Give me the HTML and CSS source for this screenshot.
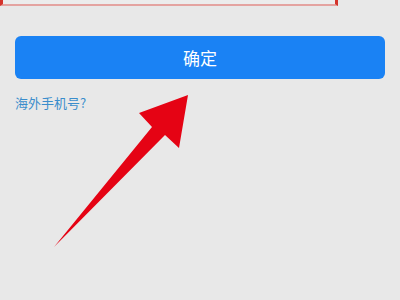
FILE: index.html
```html
<!DOCTYPE html>
<html lang="zh">
<head>
<meta charset="utf-8">
<link rel="stylesheet" href="styles.css">
</head>
<body>
<div class="page">
  <div class="input-box"></div>
  <button class="confirm">确定</button>
  <a class="overseas">海外手机号?</a>
  <svg class="arrow" width="400" height="300" viewBox="0 0 400 300">
    <polygon points="188,95 139,113 152,127 54,247 165,135 179,148" fill="#e50314"/>
  </svg>
</div>
</body>
</html>
```
FILE: styles.css
```css
html, body {
  margin: 0;
  padding: 0;
  background: #e8e8e8;
}
.page {
  position: relative;
  width: 400px;
  height: 300px;
  overflow: hidden;
  font-family: "Noto Sans CJK SC", "Noto Sans", sans-serif;
  display: flex;
  flex-direction: column;
}
.input-box {
  width: 332px;
  height: 4px;
  margin-left: 0;
  background: #ececec;
  border-left: 3px solid #d4332b;
  border-right: 3px solid #d4332b;
  border-bottom: 2px solid #e4a3a0;
}
.confirm {
  margin: 30px 15px 0 15px;
  height: 43px;
  border: none;
  border-radius: 6px;
  background: #1a82f4;
  color: #ffffff;
  font-family: inherit;
  font-size: 17px;
  padding: 0;
  line-height: 43px;
}
.overseas {
  margin: 14px 0 0 15px;
  font-size: 13px;
  line-height: 20px;
  color: #3a8dcc;
}
.arrow {
  position: absolute;
  left: 0;
  top: 0;
}
```
